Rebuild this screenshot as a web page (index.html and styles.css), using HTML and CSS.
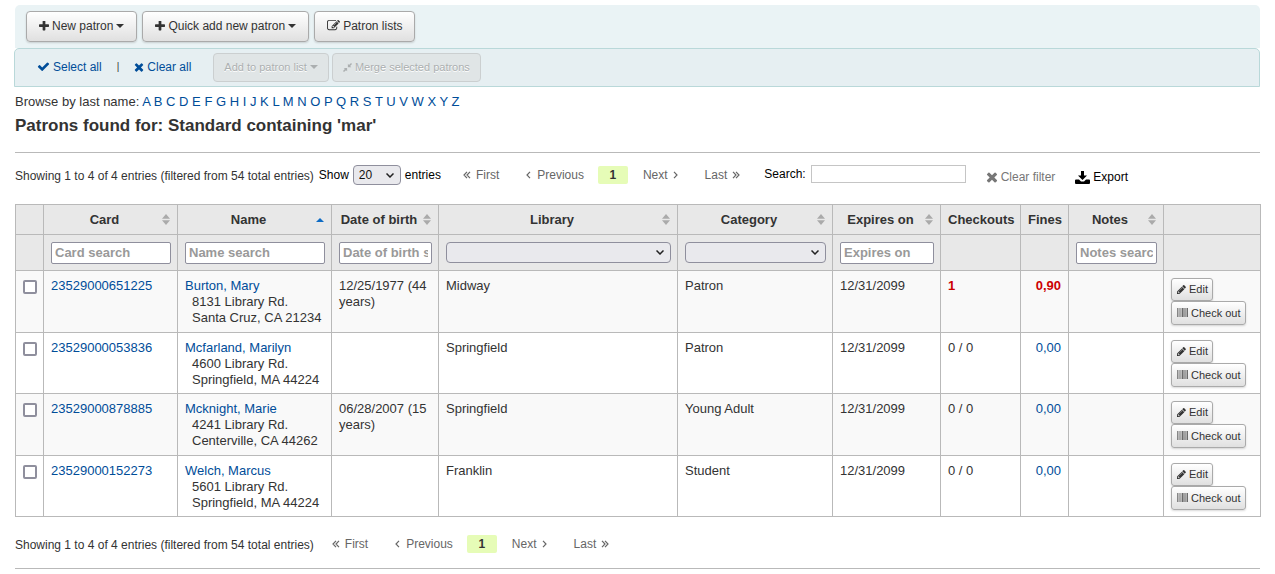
FILE: index.html
```
<!DOCTYPE html>
<html lang="en">
<head>
<meta charset="utf-8">
<title>Patrons found</title>
<link rel="stylesheet" href="styles.css">
</head>
<body>
<svg class="sprite" aria-hidden="true">
<symbol id="plus" viewBox="192 192 1408 1408"><path d="M1600 736v192q0 40-28 68t-68 28h-416v416q0 40-28 68t-68 28h-192q-40 0-68-28t-28-68v-416h-416q-40 0-68-28t-28-68v-192q0-40 28-68t68-28h416v-416q0-40 28-68t68-28h192q40 0 68 28t28 68v416h416q40 0 68 28t28 68z"/></symbol>
<symbol id="check" viewBox="0 0 1792 1792"><path d="M1671 566q0 40-28 68l-724 724-136 136q-28 28-68 28t-68-28l-136-136-362-362q-28-28-28-68t28-68l136-136q28-28 68-28t68 28l294 295 656-657q28-28 68-28t68 28l136 136q28 28 28 68z"/></symbol>
<symbol id="times" viewBox="192 192 1408 1408"><path d="M1490 1322q0 40-28 68l-136 136q-28 28-68 28t-68-28l-294-294-294 294q-28 28-68 28t-68-28l-136-136q-28-28-28-68t28-68l294-294-294-294q-28-28-28-68t28-68l136-136q28-28 68-28t68 28l294 294 294-294q28-28 68-28t68 28l136 136q28 28 28 68t-28 68l-294 294 294 294q28 28 28 68z"/></symbol>
<symbol id="edit-square" viewBox="0 0 1792 1792"><path d="M888 1184l116-116-152-152-116 116v56h96v96h56zm440-720q-16-16-33 1l-350 350q-17 17-1 33t33-1l350-350q17-17 1-33zm80 594v190q0 119-84.5 203.5t-203.5 84.5h-832q-119 0-203.5-84.5t-84.5-203.5v-832q0-119 84.5-203.5t203.5-84.5h832q63 0 117 25 15 7 18 23 3 17-9 29l-49 49q-14 14-32 8-23-6-45-6h-832q-66 0-113 47t-47 113v832q0 66 47 113t113 47h832q66 0 113-47t47-113v-126q0-13 9-22l64-64q15-15 35-7t20 29zm-96-738l288 288-672 672h-288v-288zm444 132l-92 92-288-288 92-92q28-28 68-28t68 28l152 152q28 28 28 68t-28 68z"/></symbol>
<symbol id="pencil" viewBox="128 128 1536 1536"><path d="M491 1536l91-91-235-235-91 91v107h128v128h107zm523-928q0-22-22-22-10 0-17 7l-542 542q-7 7-7 17 0 22 22 22 10 0 17-7l542-542q7-7 7-17zm-54-192l416 416-832 832h-416v-416zm683 96q0 53-37 90l-166 166-416-416 166-165q36-38 90-38 53 0 91 38l235 234q37 39 37 91z"/></symbol>
<symbol id="compress" viewBox="0 0 12 12"><path d="M1 6.500h4.500V11L4 9.500 1.300 12 0 10.700l2.500-2.700zM6.500 1v4.500H11L9.500 4 12 1.300 10.700 0 8 2.500z"/></symbol>
<symbol id="barcode" viewBox="0 0 11 9"><path d="M0 0h.8v9H0zM1.300 0h.4v9h-.4zM2.500 0h.5v9h-.5zM3.500 0h.9v9h-.9zM5 0h1v9H5zM6.400 0h.8v9h-.8zM7.600 0h.5v9h-.5zM8.500 0h.9v9h-.9zM9.900 0h1.100v9H9.900z"/></symbol>
<symbol id="download" viewBox="0 0 15 13"><path d="M6 0h3v4.500h3L7.500 9 3 4.500h3zM1 8.500h3l2 2h3l2-2h3q1 0 1 1V12q0 1-1 1H1q-1 0-1-1V9.500q0-1 1-1z"/></symbol>
<symbol id="caret" viewBox="0 0 8 4"><path d="M0 0h8L4 4z"/></symbol>
<symbol id="caret-up" viewBox="0 0 8 4"><path d="M0 4h8L4 0z"/></symbol>
<symbol id="sort" viewBox="0 0 8 11"><path d="M0 4.800h8L4 0zM0 6.200h8L4 11z"/></symbol>
<symbol id="chevron" viewBox="0 0 5 8"><path class="line" d="M4 .8L1 4l3 3.200"/></symbol>
<symbol id="chevrons" viewBox="0 0 8 8"><path class="line" d="M4 .8L1 4l3 3.200M7 .8L4 4l3 3.200"/></symbol>
</svg>

<main class="page">
  <div class="toolbar">
    <button class="btn" type="button"><svg class="icon"><use href="#plus"/></svg>New patron<svg class="caret"><use href="#caret"/></svg></button>
    <button class="btn" type="button"><svg class="icon"><use href="#plus"/></svg>Quick add new patron<svg class="caret"><use href="#caret"/></svg></button>
    <button class="btn" type="button"><svg class="icon wide"><use href="#edit-square"/></svg>Patron lists</button>
  </div>
  <div class="selectbar">
    <a class="action" href="#"><svg class="icon wide"><use href="#check"/></svg>Select all</a>
    <span class="divider">|</span>
    <a class="action" href="#"><svg class="icon"><use href="#times"/></svg>Clear all</a>
    <div class="bulk">
      <button class="btn muted" type="button" disabled>Add to patron list<svg class="caret"><use href="#caret"/></svg></button>
      <button class="btn muted" type="button" disabled><svg class="icon small"><use href="#compress"/></svg>Merge selected patrons</button>
    </div>
  </div>

  <nav class="browse">Browse by last name: <a href="#">A</a> <a href="#">B</a> <a href="#">C</a> <a href="#">D</a> <a href="#">E</a> <a href="#">F</a> <a href="#">G</a> <a href="#">H</a> <a href="#">I</a> <a href="#">J</a> <a href="#">K</a> <a href="#">L</a> <a href="#">M</a> <a href="#">N</a> <a href="#">O</a> <a href="#">P</a> <a href="#">Q</a> <a href="#">R</a> <a href="#">S</a> <a href="#">T</a> <a href="#">U</a> <a href="#">V</a> <a href="#">W</a> <a href="#">X</a> <a href="#">Y</a> <a href="#">Z</a></nav>
  <h1 class="title">Patrons found for: Standard containing 'mar'</h1>

  <div class="controls top">
    <span class="info">Showing 1 to 4 of 4 entries (filtered from 54 total entries)</span>
    <label class="length">Show <select class="select"><option>20</option></select> entries</label>
    <nav class="pager">
      <a class="first" href="#"><svg class="chevrons"><use href="#chevrons"/></svg>First</a>
      <a class="prev" href="#"><svg class="chevron"><use href="#chevron"/></svg>Previous</a>
      <a class="current" href="#">1</a>
      <a class="next" href="#">Next<svg class="chevron flip"><use href="#chevron"/></svg></a>
      <a class="last" href="#">Last<svg class="chevrons flip"><use href="#chevrons"/></svg></a>
    </nav>
    <label class="search">Search: <input class="searchbox" type="text"></label>
    <button class="tool clear" type="button"><svg class="clearicon"><use href="#times"/></svg>Clear filter</button>
    <button class="tool export" type="button"><svg class="exporticon"><use href="#download"/></svg>Export</button>
  </div>

  <table class="patrons">
    <colgroup><col class="c-check"><col class="c-card"><col class="c-name"><col class="c-birth"><col><col class="c-category"><col class="c-expires"><col class="c-checkouts"><col class="c-fines"><col class="c-notes"><col class="c-actions"></colgroup>
    <thead>
      <tr class="heads">
        <th></th>
        <th><div class="head"><span>Card</span><svg class="sort"><use href="#sort"/></svg></div></th>
        <th><div class="head"><span>Name</span><svg class="sort up"><use href="#caret-up"/></svg></div></th>
        <th><div class="head"><span>Date of birth</span><svg class="sort"><use href="#sort"/></svg></div></th>
        <th><div class="head"><span>Library</span><svg class="sort"><use href="#sort"/></svg></div></th>
        <th><div class="head"><span>Category</span><svg class="sort"><use href="#sort"/></svg></div></th>
        <th><div class="head"><span>Expires on</span><svg class="sort"><use href="#sort"/></svg></div></th>
        <th>Checkouts</th>
        <th>Fines</th>
        <th><div class="head"><span>Notes</span><svg class="sort"><use href="#sort"/></svg></div></th>
        <th></th>
      </tr>
      <tr class="filters">
        <th></th>
        <th><input class="filter" type="text" placeholder="Card search" aria-label="Card search"></th>
        <th><input class="filter" type="text" placeholder="Name search" aria-label="Name search"></th>
        <th><input class="filter" type="text" placeholder="Date of birth search" aria-label="Date of birth search"></th>
        <th><select class="select full" aria-label="Library"><option></option></select></th>
        <th><select class="select full" aria-label="Category"><option></option></select></th>
        <th><input class="filter" type="text" placeholder="Expires on" aria-label="Expires on"></th>
        <th></th>
        <th></th>
        <th><input class="filter" type="text" placeholder="Notes search" aria-label="Notes search"></th>
        <th></th>
      </tr>
    </thead>
    <tbody>
      <tr>
        <td><input class="tick" type="checkbox" aria-label="Select Burton, Mary"></td>
        <td><a href="#">23529000651225</a></td>
        <td><a href="#">Burton, Mary</a><div class="address">8131 Library Rd.<br>Santa Cruz, CA 21234</div></td>
        <td>12/25/1977 (44 years)</td><td>Midway</td><td>Patron</td><td>12/31/2099</td>
        <td><strong class="due">1</strong></td><td class="num"><strong class="due">0,90</strong></td><td></td>
        <td><div class="rowactions"><button class="btn mini edit" type="button"><svg class="icon small"><use href="#pencil"/></svg>Edit</button><button class="btn mini" type="button"><svg class="barcode"><use href="#barcode"/></svg>Check out</button></div></td>
      </tr>
      <tr>
        <td><input class="tick" type="checkbox" aria-label="Select Mcfarland, Marilyn"></td>
        <td><a href="#">23529000053836</a></td>
        <td><a href="#">Mcfarland, Marilyn</a><div class="address">4600 Library Rd.<br>Springfield, MA 44224</div></td>
        <td></td><td>Springfield</td><td>Patron</td><td>12/31/2099</td>
        <td>0 / 0</td><td class="num"><a href="#">0,00</a></td><td></td>
        <td><div class="rowactions"><button class="btn mini edit" type="button"><svg class="icon small"><use href="#pencil"/></svg>Edit</button><button class="btn mini" type="button"><svg class="barcode"><use href="#barcode"/></svg>Check out</button></div></td>
      </tr>
      <tr>
        <td><input class="tick" type="checkbox" aria-label="Select Mcknight, Marie"></td>
        <td><a href="#">23529000878885</a></td>
        <td><a href="#">Mcknight, Marie</a><div class="address">4241 Library Rd.<br>Centerville, CA 44262</div></td>
        <td>06/28/2007 (15 years)</td><td>Springfield</td><td>Young Adult</td><td>12/31/2099</td>
        <td>0 / 0</td><td class="num"><a href="#">0,00</a></td><td></td>
        <td><div class="rowactions"><button class="btn mini edit" type="button"><svg class="icon small"><use href="#pencil"/></svg>Edit</button><button class="btn mini" type="button"><svg class="barcode"><use href="#barcode"/></svg>Check out</button></div></td>
      </tr>
      <tr>
        <td><input class="tick" type="checkbox" aria-label="Select Welch, Marcus"></td>
        <td><a href="#">23529000152273</a></td>
        <td><a href="#">Welch, Marcus</a><div class="address">5601 Library Rd.<br>Springfield, MA 44224</div></td>
        <td></td><td>Franklin</td><td>Student</td><td>12/31/2099</td>
        <td>0 / 0</td><td class="num"><a href="#">0,00</a></td><td></td>
        <td><div class="rowactions"><button class="btn mini edit" type="button"><svg class="icon small"><use href="#pencil"/></svg>Edit</button><button class="btn mini" type="button"><svg class="barcode"><use href="#barcode"/></svg>Check out</button></div></td>
      </tr>
    </tbody>
  </table>

  <div class="controls bottom">
    <span class="info">Showing 1 to 4 of 4 entries (filtered from 54 total entries)</span>
    <nav class="pager">
      <a class="first" href="#"><svg class="chevrons"><use href="#chevrons"/></svg>First</a>
      <a class="prev" href="#"><svg class="chevron"><use href="#chevron"/></svg>Previous</a>
      <a class="current" href="#">1</a>
      <a class="next" href="#">Next<svg class="chevron flip"><use href="#chevron"/></svg></a>
      <a class="last" href="#">Last<svg class="chevrons flip"><use href="#chevrons"/></svg></a>
    </nav>
  </div>
</main>
</body>
</html>
```
FILE: styles.css
```
* { box-sizing: border-box; }
body {
  margin: 0;
  padding: 5px 15px 0;
  background: #fff;
  color: #333;
  font: 13px/16px "Liberation Sans", Arial, sans-serif;
}
button, input, select { font-family: inherit; }
a { color: #004d99; text-decoration: none; }
svg { display: block; flex: none; fill: currentColor; }
.sprite { display: none; }
.line { fill: none; stroke: currentColor; stroke-width: 1.2; }

.toolbar {
  display: flex;
  gap: 5px;
  padding: 6px 11px;
  background: #eaf3f5;
  border-radius: 5px 5px 0 0;
}
.btn {
  display: flex;
  align-items: center;
  gap: 3px;
  height: 31px;
  padding: 0 12px 2px;
  border: 1px solid #aaa;
  border-radius: 4px;
  background: linear-gradient(#fff, #e0e0e0);
  box-shadow: 0 1px 2px rgba(0, 0, 0, .15);
  color: #333;
  font-size: 12px;
  line-height: 16px;
  white-space: nowrap;
}
.icon { width: 10px; height: 10px; }
.icon.wide { width: 13px; height: 13px; }
.icon.small { width: 9px; height: 9px; }
.caret { width: 8px; height: 4px; }

.selectbar {
  display: flex;
  align-items: center;
  margin-left: -1px;
  padding: 4px 22px;
  border: 1px solid #b9d8d9;
  border-radius: 5px 5px 0 0;
  background: #e6eff2;
  font-size: 12px;
}
.action { display: flex; align-items: center; gap: 3px; padding-bottom: 2px; }
.divider { margin: 0 15px; padding-bottom: 2px; font-size: 10px; }
.bulk { display: flex; gap: 3px; margin-left: 22px; }
.btn.muted {
  height: 29px;
  padding: 0 10px 1px;
  border-color: #cbcfd0;
  background: #e0e5e6;
  box-shadow: none;
  color: #abafb0;
  font-size: 11px;
  text-shadow: 0 1px 0 #fff;
}
.browse { margin-top: 7px; }
.title { margin: 6px 0 0; font-size: 17px; line-height: 20px; }

.controls { display: flex; align-items: center; font-size: 12px; line-height: 16px; }
.controls.top {
  height: 52px;
  margin-top: 16px;
  padding-bottom: 7px;
  border-top: 1px solid #b9b9b9;
}
.controls.bottom { height: 52px; padding-top: 3px; border-bottom: 1px solid #b9b9b9; }
.info { padding-top: 2px; }
.length { display: flex; align-items: center; gap: 4px; margin-left: 5px; color: #000; }
.select {
  appearance: none;
  width: 48px;
  height: 20px;
  padding: 0 20px 0 5px;
  border: 1px solid #8f8f9d;
  border-radius: 4px;
  background: #e9e9ed url("data:image/svg+xml,%3Csvg xmlns='http://www.w3.org/2000/svg' width='8' height='5'%3E%3Cpath d='M.5.5L4 4 7.500.5' fill='none' stroke='%23222' stroke-width='1.500'/%3E%3C/svg%3E") no-repeat right 6px center;
  color: #111;
  font-size: 12px;
}
.select.full { display: block; width: 100%; height: 21px; }
.pager { display: flex; align-items: center; margin-left: 22px; }
.bottom .pager { margin-left: 18px; }
.pager a { display: flex; align-items: center; gap: 5px; color: #666; }
.pager .prev { margin-left: 27px; gap: 6px; }
.pager .current {
  justify-content: center;
  width: 30px;
  height: 18px;
  margin: 0 15px 0 14px;
  border-radius: 2px;
  background: #e6fcb7;
  color: #333;
  font-weight: bold;
}
.pager .last { margin-left: 27px; }
.chevron { width: 5px; height: 8px; }
.chevrons { width: 8px; height: 8px; }
.flip { transform: scaleX(-1); }
.search { display: flex; align-items: center; gap: 5px; margin-left: 24px; padding-bottom: 2px; color: #000; }
.searchbox { width: 155px; height: 18px; border: 1px solid #c5c5c5; }
.tool { display: flex; align-items: center; gap: 3px; padding: 4px 0 0; border: 0; background: none; font-size: 12px; line-height: 16px; }
.clear { margin-left: 20px; color: #777; }
.export { margin-left: 20px; color: #000; }
.clearicon { width: 12px; height: 12px; }
.exporticon { width: 15px; height: 13px; }

.patrons { width: calc(100% + 1px); border-collapse: collapse; table-layout: fixed; }
.c-check { width: 28px; }
.c-card { width: 134px; }
.c-name { width: 154px; }
.c-birth { width: 107px; }
.c-category { width: 155px; }
.c-expires { width: 108px; }
.c-checkouts { width: 80px; }
.c-fines { width: 48px; }
.c-notes { width: 95px; }
.c-actions { width: 97px; }
.patrons th, .patrons td { border: 1px solid #b9b9b9; }
.patrons th { height: 30px; padding: 0 6px 0 7px; background: #e8e8e8; }
.patrons .filters th { height: 36px; }
.patrons td { height: 61px; padding: 7px 6px 5px 7px; vertical-align: top; }
.patrons tbody tr:nth-child(odd) td { height: 62px; background: #f9f9f9; }
.patrons tbody tr:nth-child(4n + 4) td, .patrons tbody tr:nth-child(even) td { background: #fff; }
.patrons td.num { padding-right: 7px; text-align: right; }
.head { display: flex; align-items: center; gap: 4px; }
.head span { flex: 1; white-space: nowrap; }
.sort { width: 8px; height: 11px; margin-right: 1px; color: #aaa; }
.sort.up { height: 4px; color: #0d6bc4; }
.filter {
  display: block;
  width: 100%;
  height: 22px;
  padding: 0 3px;
  border: 1px solid #8f8f9d;
  border-radius: 2px;
  background: #fff;
  font-size: 13px;
  font-weight: bold;
}
.filter::placeholder { color: #999; }
.tick {
  display: block;
  appearance: none;
  width: 14px;
  height: 14px;
  margin: 2px 0 0;
  border: 2px solid #8f8f9d;
  border-radius: 2px;
  background: #fff;
}
.address { padding-left: 7px; }
.due { color: #c00; }
.rowactions { display: flex; flex-direction: column; align-items: flex-start; }
.btn.mini { height: 24px; padding: 0 4px 1px 5px; border-radius: 3px; font-size: 11px; }
.btn.mini.edit { height: 23px; }
.barcode { width: 11px; height: 9px; opacity: .7; }
```
